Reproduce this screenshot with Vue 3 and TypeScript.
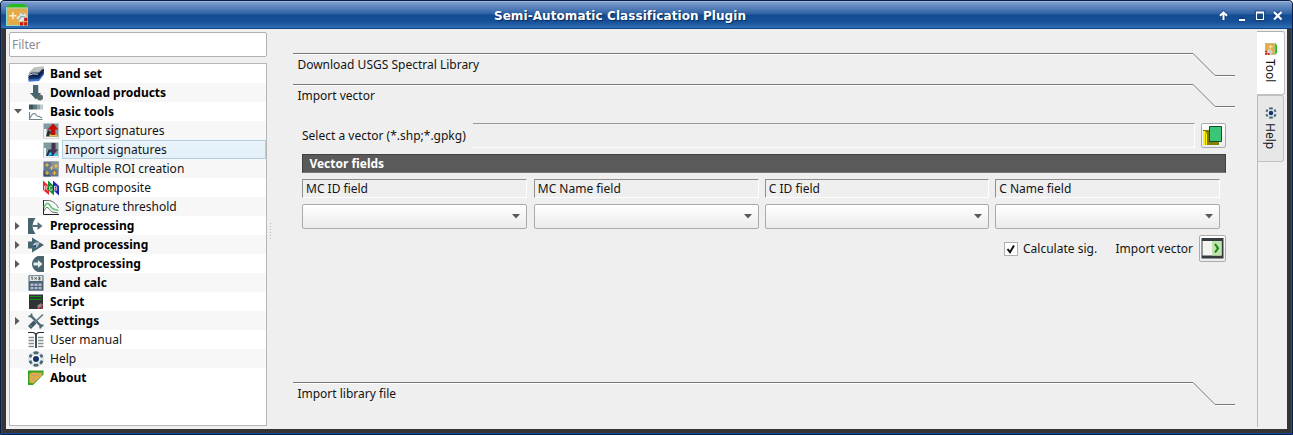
<script setup lang="ts">
import { ref } from 'vue'

interface Shape {
  d: string
  f?: string
  s?: string
  w?: number
}
interface Row {
  label: string
  icon: string
  bold?: boolean
  child?: boolean
  arrow?: 'open' | 'closed'
}

const slate = '#47656e'

const icons: Record<string, Shape[]> = {
  layers: [
    { d: 'M.5 13 L5 8 L16 7.5 V8.5 L11 15 L.5 15.8Z', f: '#4275cf' },
    { d: 'M.5 11.5 L5 7 L16 5.5 V7 L11 13 L.5 13.6Z', f: '#173978' },
    { d: 'M.5 9 L5 5 L16 3 V5 L11 11 L.5 11.5Z', f: '#0c204d' },
    { d: 'M.5 7 L6 1.2 L16 .3 V1.5 L11 6.5 L5 6.5 L.5 8Z', f: '#bfc0c0' },
    { d: 'M1.500 7.2 L5 6.2 L11 6.5 L15.5 2', s: '#777b80', w: 0.7 },
    { d: 'M1 9.3 L5 7.8 L10 8.2', s: '#f2f5fb', w: 0.9 },
  ],
  download: [
    { d: 'M5 0 H10.300 V8 H13 L8 14.500 L2 8 H5Z', f: slate },
    { d: 'M9 12.5 a3 3 0 1 1 6 0 a3 3 0 1 1 -6 0', f: '#5b686c' },
  ],
  basic: [
    { d: 'M1 .5 H5 V5.5 H1Z', f: '#38545c' },
    { d: 'M5 .5 H9 V5.5 H5Z', f: '#5e7880' },
    { d: 'M9 .5 H12 V5.5 H9Z', f: '#8fa3a9' },
    { d: 'M12 .5 H15 V5.5 H12Z', f: '#bdcace' },
    { d: 'M1.5 8 V15.5 H14.5 M2 14 L4.5 10 L7 9.5 L9 12 L11 12.2 L14 14', s: '#6c858d', w: 1.1 },
  ],
  exportSig: [
    { d: 'M.5 .5 H15.5 V15.5 H.5Z', f: '#81999f' },
    { d: 'M1 6 H3.500 V13 H15 V15.5 H1Z', f: '#f5f5f5' },
    { d: 'M3 13.500 L5 7 L8 9 L15 13.500Z', f: '#1d2e34' },
    { d: 'M6 13.500 L7 10.500 L13 11 L14.500 13.500Z', f: '#d9cd55' },
    { d: 'M10 .5 L15.5 6.5 H12.300 V12 H7.700 V6.5 H4.5Z', f: '#c60c05' },
  ],
  importSig: [
    { d: 'M.5 .5 H15.5 V15.5 H.5Z', f: '#809aa1' },
    { d: 'M1 6 H3 V13.500 H15 V15.5 H1Z', f: '#f2f5f6' },
    { d: 'M3 14 L6 7 L9 11 L14 14Z', f: '#182c46' },
    { d: 'M5 14 L7 9.500 L9.500 13Z M9.500 14 L12.500 11 L15 14Z', f: '#39bdf1' },
    { d: 'M8.500 1 H12.5 V7.500 H15.300 L10.5 12.5 L5.800 7.500 H8.500Z', f: '#45304f' },
  ],
  roi: [
    { d: 'M.5 .5 H15.5 V15.5 H.5Z', f: '#63788e' },
    { d: 'M8 .5 H15.5 V10 L9 7Z', f: '#899494' },
    { d: 'M.5 9 L8 15.5 H.5Z', f: '#394f6d' },
    { d: 'M2 4 H6 M4 2 V6 M11 5 H15 M13 3 V7 M6.500 7 H10.500 M8.500 5 V9 M2 12 H6 M4 10 V14 M9.500 12 H13.500 M11.5 10 V14', s: '#ffbd3c', w: 1.1 },
  ],
  rgb: [
    { d: 'M0 .5 L6 6 V15 L0 10Z', f: '#f32027' },
    { d: 'M5 .5 L11 6 V15.5 L5 10Z', f: '#168c39' },
    { d: 'M10 .5 L16 6 V15.5 L10 10Z', f: '#1c24b4' },
    { d: 'M1.500 10.5 V6 H4 V8 H1.500 M3 8 L4.300 10.5 M9 6.3 H6.7 V10.2 H9 V8.500 M11.500 6 V10.3 H13.700 V6.3 H11.500 M11.5 8.3 H13.500', s: '#f3dada', w: 0.8 },
  ],
  threshold: [
    { d: 'M1 .5 H16 V15 H1Z', f: '#fbfbfb' },
    { d: 'M.5 1 V15.5 H16', s: '#222', w: 1 },
    { d: 'M1 1.5 H5 C9 1.5 13 4 15.500 9 M1 12 C4 5 6 10 9 13 L15 14', s: '#42494a', w: 0.8 },
    { d: 'M1 8.500 C4 2 6 4 8 8 C10 11 12 10.5 15.5 11.500', s: '#6dc681', w: 1.8 },
  ],
  pre: [
    { d: 'M0 0 H7.5 Q1.5 8 7.5 16 H0Z', f: slate },
    { d: 'M4.5 7 H9.500 V4 L14.5 8 L9.500 12 V9 H4.5Z', f: '#54717a' },
  ],
  proc: [
    { d: 'M0 4.5 H4 V.5 L16 8 L4 15.5 V11.5 H0Z', f: slate },
    { d: 'M5 7.500 L8 5 L12 5.500 L9 10.500 H5Z', f: '#a3b8bf' },
    { d: 'M5 8.500 L8 7.500 V10.500 H5Z', f: '#1b528f' },
    { d: 'M5.500 8 L8 6.500', s: '#f4fafb', w: 0.8 },
  ],
  post: [
    { d: 'M16 0 V16 H10 C7 15 4 12 4 8 C4 4 7 1 10 0Z', f: slate },
    { d: 'M5.5 6.6 H10 V4 L14.5 8 L10 12 V9.4 H5.5Z', f: '#e6ecec' },
  ],
  calc: [
    { d: 'M.5 .3 H15.5 V15.7 H.5Z', f: '#496571' },
    { d: 'M1.500 1 H14.500 V6 H1.500Z', f: '#e2e4e5' },
    { d: 'M4.2 1.500 V5 M3.2 2.3 H4.2 M6.4 2.4 L8.8 4.4 M8.8 2.4 L6.4 4.4 M10.500 2 H12 V3.4 H10.8 V4.800 H12.5', s: '#30373a', w: 0.8 },
    { d: 'M2.500 8.500 H5.5 V11 H2.500Z M6.500 8.500 H9.5 V11 H6.500Z M10.500 8.500 H13.5 V11 H10.500Z M2.500 12 H5.5 V14.3 H2.500Z M6.500 12 H9.5 V14.3 H6.500Z M10.500 12 H13.5 V14.3 H10.500Z', f: '#b9b8d8' },
  ],
  script: [
    { d: 'M1 .500 H15 V15 H1Z', f: '#303335' },
    { d: 'M2 2.5 H13.5 M2 5.5 H13.5', s: '#0b960e', w: 1.1 },
    { d: 'M9 12 L13 9 L14.5 12 L11 14Z', f: '#8e9193' },
    { d: 'M9.5 13 H11.5 V15 H9.5Z M12.7 10.2 H14.6 V12 H12.7Z M12.7 13.2 H14.6 V15 H12.7Z', f: '#d8444b' },
  ],
  settings: [
    { d: 'M2.500 2.500 L14 14', s: '#4c6873', w: 2.4 },
    { d: 'M.5 3.300 H3.5 V.5 M12.3 15.5 V12.3 H15.5', s: '#4c6873', w: 1.8 },
    { d: 'M15 1.500 L7 9', s: '#5c7480', w: 1.6 },
    { d: 'M7 9 L1.500 14.500', s: '#3e5762', w: 4 },
    { d: 'M2 12 L4 14', s: '#90a2aa', w: 0.8 },
  ],
  manual: [
    { d: 'M0 .5 H5 Q7.5 .8 8 3 Q8.5 .8 11 .5 H16', s: '#222c38', w: 1.2 },
    { d: 'M8 2 V16', s: '#2a3b4c', w: 1.8 },
    { d: 'M.5 5.500 H6 M10 5.500 H15.5 M.5 8.500 H6 M10 8.500 H15.5 M.5 11.500 H6 M10 11.500 H15.5 M.5 14.500 H6 M10 14.500 H15.5', s: '#889090', w: 1.4 },
  ],
  help: [
    { d: 'M8 1.700 A6.3 6.3 0 1 1 7.99 1.700', s: '#dce4e7', w: 2.8 },
    { d: 'M5.7 2.2 A6.2 6.2 0 0 1 10.3 2.2 M12.5 3.6 A6.2 6.2 0 0 1 14 6.4 M14 9.6 A6.2 6.2 0 0 1 12.2 12.7 M10.3 13.8 A6.2 6.2 0 0 1 5.7 13.8 M3.6 12.4 A6.2 6.2 0 0 1 2 9.6 M2 6.4 A6.2 6.2 0 0 1 3.5 3.6', s: '#4a6974', w: 2.8 },
    { d: 'M5 8 a3 3 0 1 1 6 0 a3 3 0 1 1 -6 0', f: '#14336a' },
  ],
  about: [
    { d: 'M0 .500 H15.5 V4.5 L5 15 H0Z', f: '#35a326' },
    { d: 'M1.500 4 Q3 2 6 2.500 L14.5 2.800 L13.500 6 L5 13.500 L1.500 12.5Z', f: '#e6aa45' },
    { d: 'M3.5 5 L6 6 L10 4.8 M4 9.5 L6 9 L7.5 10.5 M9 5 L11 4', s: '#a7a294', w: 0.9 },
  ],
  plugin: [
    { d: 'M0 2.500 L3 0 H13 L16 2.500 V4 H0Z', f: '#25bd1b' },
    { d: 'M0 2.500 H16 V16 H0Z', f: '#e8aa45' },
    { d: 'M.4 2.900 H15.6 V15.6 H.4Z', s: '#8cdccb', w: 0.8 },
    { d: 'M2.5 8.5 H7.5 M5 6 V11', s: '#fff0cf', w: 1.1 },
    { d: 'M7.500 10 L10 8 L11 5.500 L14 7 L15 9 L14 12 L10 13Z', f: '#dfe8e1' },
    { d: 'M9 12 L11 9 L14 9.5 M11 6 L13 7.500', s: '#8ba4ad', w: 0.8 },
    { d: 'M10.2 13.2 H12.4 V15.6 H10.2Z M13.2 10 H15.5 V12.3 H13.2Z M13.2 13.2 H15.5 V15.6 H13.2Z', f: '#c81619' },
  ],
}

const rows: Row[] = [
  { label: 'Band set', icon: 'layers', bold: true },
  { label: 'Download products', icon: 'download', bold: true },
  { label: 'Basic tools', icon: 'basic', bold: true, arrow: 'open' },
  { label: 'Export signatures', icon: 'exportSig', child: true },
  { label: 'Import signatures', icon: 'importSig', child: true },
  { label: 'Multiple ROI creation', icon: 'roi', child: true },
  { label: 'RGB composite', icon: 'rgb', child: true },
  { label: 'Signature threshold', icon: 'threshold', child: true },
  { label: 'Preprocessing', icon: 'pre', bold: true, arrow: 'closed' },
  { label: 'Band processing', icon: 'proc', bold: true, arrow: 'closed' },
  { label: 'Postprocessing', icon: 'post', bold: true, arrow: 'closed' },
  { label: 'Band calc', icon: 'calc', bold: true },
  { label: 'Script', icon: 'script', bold: true },
  { label: 'Settings', icon: 'settings', bold: true, arrow: 'closed' },
  { label: 'User manual', icon: 'manual' },
  { label: 'Help', icon: 'help' },
  { label: 'About', icon: 'about', bold: true },
]

const sections = ['Download USGS Spectral Library', 'Import vector', 'Import library file']
const fields = ['MC ID field', 'MC Name field', 'C ID field', 'C Name field']
const selected = ref('Import signatures')
const calculate = ref(true)
</script>

<template>
  <div class="window">
    <header class="titlebar">
      <svg class="app-icon" viewBox="0 0 16 16">
        <path v-for="(p, i) in icons.plugin" :key="i" :d="p.d" :fill="p.f ?? 'none'" :stroke="p.s" :stroke-width="p.w" />
      </svg>
      <h1>Semi-Automatic Classification Plugin</h1>
      <svg class="controls" width="66" height="12" viewBox="0 0 66 12">
        <g fill="none" stroke="#0d3569" stroke-width="4" opacity=".55">
          <path d="M4.5 10V3M1.5 5.5L4.5 2.5L7.5 5.5M19.5 9.5H25.5M37.5 2.5H44.5V9.5H37.5ZM55 2L62 9M62 2L55 9" />
        </g>
        <g fill="none" stroke="#fff">
          <path d="M4.5 10V3M1 5.8L4.5 2.3L8 5.8" stroke-width="2" />
          <path d="M20 10H26" stroke-width="2" />
          <path d="M37.5 2.5H44.5V9.5H37.5Z" stroke-width="1.2" />
          <path d="M37 2.5H45" stroke-width="2" />
          <path d="M55 2L62.5 9.5M62.5 2L55 9.5" stroke-width="2.2" />
        </g>
      </svg>
    </header>

    <div class="body">
      <aside class="side">
        <input class="filter" type="text" placeholder="Filter" />
        <ul class="tree">
          <li
            v-for="r in rows"
            :key="r.label"
            class="row"
            :class="{ bold: r.bold, child: r.child, selected: selected === r.label }"
            @click="selected = r.label"
          >
            <span class="twist">
              <svg v-if="r.arrow === 'open'" width="8" height="5" viewBox="0 0 8 5"><path d="M0 0H8L4 4.6Z" fill="#5a5a5a" /></svg>
              <svg v-else-if="r.arrow" class="closed" width="5" height="8" viewBox="0 0 5 8"><path d="M0 0L4.6 4L0 8Z" fill="#5a5a5a" /></svg>
            </span>
            <svg class="icon" width="16" height="16" viewBox="0 0 16 16">
              <path v-for="(p, i) in icons[r.icon]" :key="i" :d="p.d" :fill="p.f ?? 'none'" :stroke="p.s" :stroke-width="p.w" />
            </svg>
            <span class="label">{{ r.label }}</span>
          </li>
        </ul>
      </aside>

      <div class="splitter"><i v-for="n in 6" :key="n"></i></div>

      <main class="toolbox">
        <section v-for="title in sections" :key="title" class="section">
          <div class="page-tab">
            <svg width="942" height="25" viewBox="0 0 942 25" fill="none">
              <path d="M0 1.5H900L922 23.5H942" stroke="#fff" />
              <path d="M0 .5H900L922 22.5H942" stroke="#777" />
            </svg>
            <span>{{ title }}</span>
          </div>
          <div v-if="title === 'Import vector'" class="page">
            <div class="select-line">
              <label>Select a vector (*.shp;*.gpkg)</label>
              <div class="path-field"></div>
              <button class="btn open">
                <svg width="21" height="21" viewBox="0 0 21 21">
                  <path d="M5 8H16V20H5Z" fill="#858000" />
                  <path d="M0 5H6V20H0Z" fill="#807b00" />
                  <path d="M0 6H2L4 9V20H0Z" fill="#fff600" />
                  <path d="M2.5 8V20" stroke="#b3a900" />
                  <path d="M6.5 1.5H18.5V16.5H6.5Z" fill="#39c777" stroke="#144b33" />
                </svg>
              </button>
            </div>
            <h2>Vector fields</h2>
            <div class="fields">
              <div v-for="f in fields" :key="f" class="field">
                <div class="caption">{{ f }}</div>
                <div class="combo"><svg width="8" height="5" viewBox="0 0 8 5"><path d="M0 0H8L4 4.5Z" fill="#5a5a5a" /></svg></div>
              </div>
            </div>
            <div class="actions">
              <span class="check" @click="calculate = !calculate">
                <svg v-if="calculate" width="12" height="12" viewBox="0 0 12 12"><path d="M2.5 6L5 9.2L9 2.5" fill="none" stroke="#111" stroke-width="2" /></svg>
              </span>
              <span class="sig">Calculate sig.</span>
              <span class="imp">Import vector</span>
              <button class="btn run">
                <svg width="23" height="21" viewBox="0 0 23 21">
                  <path d="M.5 0H22.5V20.5H.5Z" fill="#363b3f" />
                  <path d="M1.5 3H20.5V17.5H1.500Z" fill="#f4f4f1" />
                  <path d="M11 3H20.5V17.5H11Z" fill="#c0e4ac" />
                  <path d="M14 6L17 10.2L14 14.500" fill="none" stroke="#168018" stroke-width="2" />
                </svg>
              </button>
            </div>
          </div>
        </section>
      </main>

      <nav class="tabs">
        <div class="tab active">
          <svg width="12" height="12" viewBox="0 0 16 16"><g transform="rotate(90 8 8)"><path v-for="(p, i) in icons.plugin" :key="i" :d="p.d" :fill="p.f ?? 'none'" :stroke="p.s" :stroke-width="p.w" /></g></svg>
          <span>Tool</span>
        </div>
        <div class="tab">
          <svg width="12" height="12" viewBox="0 0 16 16"><path v-for="(p, i) in icons.help" :key="i" :d="p.d" :fill="p.f ?? 'none'" :stroke="p.s" :stroke-width="p.w" /></svg>
          <span>Help</span>
        </div>
      </nav>
    </div>
  </div>
</template>

<style>
html, body { margin: 0; overflow: hidden; background: #fff; }
</style>

<style scoped>
* { box-sizing: border-box; }
svg { display: block; flex: none; }
.window {
  width: 1293px;
  height: 435px;
  display: flex;
  flex-direction: column;
  padding-bottom: 1px;
  border: 1px solid #071f49;
  border-radius: 4px 4px 0 0;
  background: #353537;
  box-shadow: inset 0 0 0 1px #174c96;
  overflow: hidden;
  font: 12px/19px "Noto Sans", sans-serif;
  color: #141414;
}
.titlebar {
  height: 28px;
  flex: none;
  display: flex;
  align-items: center;
  padding: 0 7px 0 5px;
  background: linear-gradient(#c3d2e6 0, #7c9dcb 1px, #4f7bb6 8px, #2c5fa3 13px, #124b91 14px, #17519a 21px, #3470b3 27px, #0e438a 27px);
}
.app-icon { width: 22px; height: 22px; }
h1 {
  flex: 1;
  margin: 0;
  padding: 2px 7px 0 0;
  text-align: center;
  font: bold 12px/27px "DejaVu Sans", sans-serif;
  letter-spacing: 0.075px;
  color: #fff;
  text-shadow: 1px 1px 1px #0b2c5c;
}
.controls { margin-top: 1px; }
.body {
  flex: 1;
  min-height: 0;
  display: flex;
  margin: 0 5px 4px;
  background: #efefef;
}
.side { width: 261px; padding: 3px 0 0 3px; flex: none; }
.filter {
  display: block;
  width: 258px;
  height: 25px;
  padding: 0 2px;
  border: 1px solid #b0b0b0;
  border-radius: 2px;
  outline: 0;
  background: #fff;
  font: 12px "Noto Sans", sans-serif;
}
.filter::placeholder { color: #8c8c8c; opacity: 1; }
.tree {
  list-style: none;
  margin: 6px 0 0;
  padding: 0;
  width: 258px;
  height: 363px;
  background: #fff;
  border: 1px solid #b6b6b6;
}
.row { height: 19px; display: flex; align-items: center; }
.row:nth-child(even) { background: #f7f7f7; }
.twist { width: 18px; padding-left: 4px; flex: none; }
.closed { margin-left: 1px; }
.child .twist { width: 33px; }
.label { height: 19px; margin-left: 3px; padding-left: 3px; line-height: 17px; border: 1px solid transparent; border-left: 0; }
.bold .label { font-weight: 700; color: #000; }
.selected .label { flex: 1; padding-left: 2px; border: 1px solid #b2cfe1; background: linear-gradient(#eaf4fa, #e2eff7); }
.splitter { width: 7px; flex: none; padding: 194px 0 0 3px; }
.splitter i { display: block; width: 1px; height: 1px; margin-bottom: 2px; background: #b5b5b5; }
.toolbox { width: 942px; margin: 24px 0 0 19px; flex: none; display: flex; flex-direction: column; }
.section { flex: none; }
.page-tab { height: 31px; display: grid; }
.page-tab > * { grid-area: 1 / 1; }
.page-tab span { padding: 2px 0 0 4.4px; }
.page { height: 267px; padding: 8px 9px 0; }
.select-line { display: flex; height: 25px; }
.select-line label { width: 171px; line-height: 25px; flex: none; }
.path-field { width: 722px; margin-right: 6px; border: 1px solid #fff; border-top-color: #999; border-left: 0; }
.btn {
  padding: 0;
  border: 1px solid #ababab;
  border-radius: 2px;
  background: linear-gradient(#fff, #ececec);
  display: flex;
  align-items: center;
  justify-content: center;
}
.open { width: 25px; height: 25px; flex: none; }
h2 {
  margin: 6px 0 6px;
  height: 19px;
  padding-left: 6.4px;
  border: 1px solid #424242;
  border-bottom-color: #777;
  background: #5a5a5a;
  color: #fff;
  font: bold 12px/17px "Noto Sans", sans-serif;
}
.fields { display: grid; grid-template-columns: 225px 225px 224px 225px; column-gap: 6.4px; }
.field:nth-child(2) { margin-left: 0.4px; margin-right: -0.4px; }
.caption { height: 19px; padding-left: 3px; line-height: 18px; border: 1px solid #fff; border-top-color: #8f8f8f; border-left-color: #8f8f8f; }
.combo {
  height: 25px;
  margin-top: 6px;
  padding-right: 6px;
  display: flex;
  align-items: center;
  justify-content: flex-end;
  border: 1px solid #ababab;
  border-radius: 2px;
  background: linear-gradient(#fff, #ebebeb);
}
.actions { display: flex; align-items: center; justify-content: flex-end; height: 27px; margin-top: 6px; }
.check { width: 14px; height: 14px; border: 1px solid #b0b0b0; background: #fff; margin-right: 5px; }
.sig { margin-right: 18.4px; }
.imp { margin-right: 6px; }
.run { width: 27px; height: 27px; }
.tabs { width: 29px; height: 396px; margin: 2px 0 0 22px; border-left: 1px solid #bababa; }
.tab {
  writing-mode: vertical-rl;
  width: 26px;
  height: 67px;
  display: flex;
  align-items: center;
  gap: 4px;
  padding-top: 11px;
  border: 1px solid #c1c1c1;
  border-left: 0;
  border-radius: 0 3px 3px 0;
  background: #e7e7e7;
}
.tab.active { width: 28px; height: 64px; margin-left: -1px; background: #fff; border-top-color: #b0b0b0; }
</style>
